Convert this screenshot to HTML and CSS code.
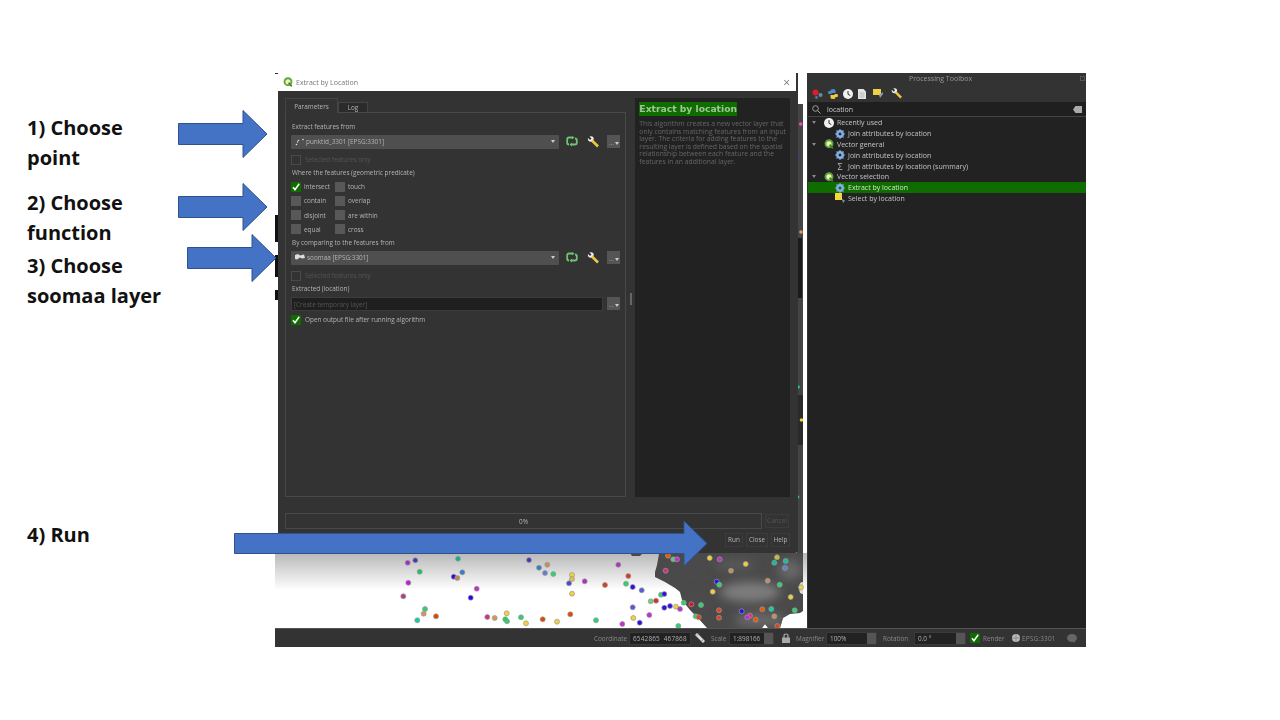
FILE: index.html
```html
<!DOCTYPE html>
<html lang="en">
<head>
  <meta charset="UTF-8">
  <title>Extract by location steps</title>
  <link rel="stylesheet" href="styles.css">
</head>
<body>
<div class="slide">

  <div class="shot">
    <div class="shot-main">
      <div class="map-area">
        <svg class="map" width="532" height="555" viewBox="275 73 532 555">
          <defs>
            <linearGradient id="fade" x1="0" y1="0" x2="0" y2="1">
              <stop offset="0" stop-color="#b8b8b8"/>
              <stop offset="1" stop-color="#ffffff"/>
            </linearGradient>
            <filter id="soft"><feGaussianBlur stdDeviation="5"/></filter>
            <clipPath id="raster">
              <path d="M630 553L632 556H640L642 554H659L657 565L655 572L655 577L665 582L675 588L680 592L682 600L690 610L697 617L707 628H762L765 624L768 628H780L783 618L790 614L800 613L803 611V553Z"/>
            </clipPath>
          </defs>
          <rect x="275" y="73" width="532" height="555" fill="#fff"/>
          <rect x="275" y="553" width="532" height="37" fill="url(#fade)"/>
          <rect x="797" y="104" width="6" height="449" fill="#444"/>
          <rect x="798" y="238" width="4" height="60" fill="#1b1b1b"/>
          <rect x="798" y="395" width="5" height="50" fill="#2a2a2a"/>
          <rect x="275" y="215" width="3" height="27" fill="#111"/>
          <rect x="275" y="255" width="3" height="22" fill="#111"/>
          <rect x="275" y="290" width="3" height="10" fill="#111"/>
          <rect x="275" y="73" width="3" height="1" fill="#333"/>
          <g clip-path="url(#raster)">
            <rect x="625" y="550" width="180" height="80" fill="#4a4a4a"/>
            <g filter="url(#soft)">
              <ellipse cx="750" cy="592" rx="30" ry="10" fill="#7c7c7c"/>
              <ellipse cx="700" cy="600" rx="10" ry="10" fill="#4c4c4c"/>
              <ellipse cx="760" cy="620" rx="26" ry="8" fill="#666"/>
              <ellipse cx="735" cy="565" rx="20" ry="6" fill="#585858"/>
              <ellipse cx="790" cy="570" rx="12" ry="10" fill="#686868"/>
            </g>
            <ellipse cx="802" cy="588" rx="3" ry="6" fill="#d8d8d8"/>
          </g>
          <g class="dots">
            <circle cx="407.7" cy="562.7" fill="#a030c0"/>
            <circle cx="415.3" cy="560.3" fill="#4438b0"/>
            <circle cx="458" cy="558.7" fill="#10b090"/>
            <circle cx="419.7" cy="571.7" fill="#22c060"/>
            <circle cx="408.3" cy="582.7" fill="#c020d0"/>
            <circle cx="403.3" cy="596.3" fill="#b04080"/>
            <circle cx="425" cy="609" fill="#30d070"/>
            <circle cx="423.7" cy="613.7" fill="#d09860"/>
            <circle cx="417.3" cy="620.3" fill="#10d0a0"/>
            <circle cx="436" cy="616.3" fill="#d84808"/>
            <circle cx="453.7" cy="576.7" fill="#3008e0"/>
            <circle cx="457.3" cy="578" fill="#c08850"/>
            <circle cx="462.3" cy="572.3" fill="#3080c0"/>
            <circle cx="476.7" cy="588.7" fill="#c030d0"/>
            <circle cx="470.7" cy="597.7" fill="#3000e0"/>
            <circle cx="529" cy="560" fill="#4438b0"/>
            <circle cx="539" cy="567.7" fill="#3080c0"/>
            <circle cx="547.3" cy="564.7" fill="#c09060"/>
            <circle cx="545" cy="573" fill="#6080d0"/>
            <circle cx="553.3" cy="574" fill="#30d070"/>
            <circle cx="487.3" cy="617" fill="#d03080"/>
            <circle cx="494.7" cy="618" fill="#d09860"/>
            <circle cx="506.7" cy="613.3" fill="#f0d040"/>
            <circle cx="507" cy="621.3" fill="#30d070"/>
            <circle cx="505.3" cy="619.3" fill="#20d060"/>
            <circle cx="521" cy="617.3" fill="#30d070"/>
            <circle cx="526" cy="623.3" fill="#f0d040"/>
            <circle cx="542.7" cy="619.3" fill="#e04808"/>
            <circle cx="572" cy="575" fill="#f0d040"/>
            <circle cx="572" cy="579" fill="#e0c040"/>
            <circle cx="569" cy="583.3" fill="#4848d0"/>
            <circle cx="584.7" cy="581.3" fill="#b030c0"/>
            <circle cx="605" cy="585" fill="#d04020"/>
            <circle cx="618.3" cy="564.7" fill="#b030c0"/>
            <circle cx="628.3" cy="576" fill="#d04020"/>
            <circle cx="626" cy="583.7" fill="#30d070"/>
            <circle cx="632.7" cy="587" fill="#3010e0"/>
            <circle cx="641.7" cy="590.3" fill="#5858d8"/>
            <circle cx="572" cy="593.7" fill="#f0d040"/>
            <circle cx="661" cy="594.7" fill="#30d070"/>
            <circle cx="664.3" cy="594" fill="#3010e0"/>
            <circle cx="650.7" cy="601.3" fill="#70d070"/>
            <circle cx="656" cy="600.7" fill="#d03030"/>
            <circle cx="632.7" cy="607.3" fill="#5858d8"/>
            <circle cx="664.3" cy="607.7" fill="#3010e0"/>
            <circle cx="670" cy="606" fill="#3010e0"/>
            <circle cx="676" cy="606.7" fill="#f0d040"/>
            <circle cx="680" cy="609" fill="#c030d0"/>
            <circle cx="683.7" cy="602.7" fill="#30d070"/>
            <circle cx="691.3" cy="604.3" fill="#e01030"/>
            <circle cx="701" cy="605" fill="#30d070"/>
            <circle cx="719" cy="610.3" fill="#d84820"/>
            <circle cx="719" cy="617.7" fill="#d84820"/>
            <circle cx="695.7" cy="616.3" fill="#30d070"/>
            <circle cx="698.7" cy="617.3" fill="#d84820"/>
            <circle cx="570.3" cy="614.3" fill="#e04808"/>
            <circle cx="557" cy="621.7" fill="#f0d040"/>
            <circle cx="596" cy="620.3" fill="#30d070"/>
            <circle cx="633.3" cy="618" fill="#f0d040"/>
            <circle cx="649.3" cy="615" fill="#c030d0"/>
            <circle cx="622.3" cy="624" fill="#c030d0"/>
            <circle cx="639.7" cy="622.7" fill="#3010e0"/>
            <circle cx="678.3" cy="626" fill="#30d070"/>
            <circle cx="741.7" cy="611.3" fill="#3010e0"/>
            <circle cx="750" cy="615.7" fill="#e03080"/>
            <circle cx="747.3" cy="617.3" fill="#c030d0"/>
            <circle cx="755.7" cy="619.7" fill="#e85808"/>
            <circle cx="762.3" cy="609.3" fill="#e85808"/>
            <circle cx="771.3" cy="609" fill="#10d0a0"/>
            <circle cx="774.3" cy="616.3" fill="#c09060"/>
            <circle cx="794.7" cy="610.3" fill="#30d070"/>
            <circle cx="777.3" cy="626" fill="#d84820"/>
            <circle cx="716.7" cy="581.7" fill="#3010e0"/>
            <circle cx="719.3" cy="584.7" fill="#30d070"/>
            <circle cx="712.7" cy="591.7" fill="#f0d040"/>
            <circle cx="767.7" cy="580.7" fill="#c09060"/>
            <circle cx="779.7" cy="584.7" fill="#30d070"/>
            <circle cx="790.7" cy="597" fill="#f0d040"/>
            <circle cx="801" cy="587.3" fill="#f0d040"/>
            <circle cx="731" cy="570.7" fill="#c09060"/>
            <circle cx="745.7" cy="564" fill="#f0d040"/>
            <circle cx="709.7" cy="558" fill="#f0d040"/>
            <circle cx="719.7" cy="559.3" fill="#c030d0"/>
            <circle cx="774.3" cy="562.7" fill="#10c0a0"/>
            <circle cx="785.7" cy="561" fill="#10c0a0"/>
            <circle cx="777" cy="557.3" fill="#c0c030"/>
            <circle cx="785" cy="568" fill="#6080d0"/>
            <circle cx="665.7" cy="570.7" fill="#d03080"/>
            <circle cx="673.3" cy="559.3" fill="#50d070"/>
            <circle cx="677" cy="559.3" fill="#c030d0"/>
            <circle cx="668" cy="555.7" fill="#e85808"/>
          </g>
          <g class="strip-dots">
            <circle cx="800.7" cy="124" fill="#e050c0"/>
            <circle cx="797.5" cy="155" fill="#4030b0"/>
            <circle cx="801" cy="232" fill="#e09860"/>
            <circle cx="798" cy="387" fill="#10d0a0"/>
            <circle cx="801.5" cy="420" fill="#f0d040"/>
            <circle cx="797.5" cy="497" fill="#30d070"/>
          </g>
        </svg>

        <div class="dialog">
          <div class="dialog-title">
            <svg width="10" height="10" viewBox="0 0 16 16"><circle cx="8" cy="7.500" r="5.600" fill="#f6f2b0" stroke="#59a83c" stroke-width="3"/><path d="M9 9l5 6" stroke="#3f8a2c" stroke-width="2.600"/></svg>
            <span class="dialog-name">Extract by Location</span>
            <span class="dialog-close">×</span>
          </div>
          <div class="dialog-body">
            <div class="dialog-panes">
              <div class="left-pane">
                <div class="tabs">
                  <span class="tab tab-active">Parameters</span>
                  <span class="tab">Log</span>
                </div>
                <div class="tab-page">
                  <div class="label first">Extract features from</div>
                  <div class="combo-row">
                    <div class="combo">
                      <svg width="9" height="8" viewBox="0 0 9 8"><g fill="#ddd"><circle cx="1.500" cy="6.500" r=".8"/><circle cx="3.500" cy="2.500" r=".8"/><circle cx="2.500" cy="4" r=".7"/><circle cx="8" cy="1.500" r=".8"/></g></svg>
                      <span class="combo-text">punktid_3301 [EPSG:3301]</span>
                      <span class="caret"></span>
                    </div>
                    <svg class="reload" width="12" height="11" viewBox="0 0 12 11"><path d="M3 8.500Q1.200 8.500 1.200 6.800V3.200Q1.200 1.500 3 1.500H6M9 2.500Q10.800 2.500 10.800 4.200V6.800Q10.800 8.500 9 8.500H6" fill="none" stroke="#6fc46f" stroke-width="1.800"/><path d="M6 0L8.500 1.500L6 3.500ZM6 6.500L3.500 8.500L6 10.500Z" fill="#6fc46f"/></svg>
                    <svg class="wrench" width="12" height="12" viewBox="0 0 12 12"><path d="M1 2L3 4L4.500 2.500L2.500 .5Q5 -.3 6.300 1.300Q7.200 2.800 6.200 4.200L5 5.500Q3 6.200 1.600 5Q.5 3.800 1 2Z" fill="#eee"/><path d="M5 4.500L11 10.500" stroke="#e8c840" stroke-width="2.600"/></svg>
                    <span class="more">...</span>
                  </div>
                  <div class="check-row disabled"><span class="box"></span><span>Selected features only</span></div>
                  <div class="label label-where">Where the features (geometric predicate)</div>
                  <div class="predicates">
                    <div class="pred"><span class="box on"><svg width="10" height="10" viewBox="0 0 10 10"><path d="M2 5.200L4 7.800L8.200 1.800" fill="none" stroke="#fff" stroke-width="1.500"/></svg></span><span>intersect</span></div>
                    <div class="pred"><span class="box"></span><span>touch</span></div>
                    <div class="pred"><span class="box"></span><span>contain</span></div>
                    <div class="pred"><span class="box"></span><span>overlap</span></div>
                    <div class="pred"><span class="box"></span><span>disjoint</span></div>
                    <div class="pred"><span class="box"></span><span>are within</span></div>
                    <div class="pred"><span class="box"></span><span>equal</span></div>
                    <div class="pred"><span class="box"></span><span>cross</span></div>
                  </div>
                  <div class="label">By comparing to the features from</div>
                  <div class="combo-row">
                    <div class="combo">
                      <svg width="10" height="7" viewBox="0 0 10 7"><path d="M0 1L3 0L5 1.500L9 .5L10 4L7 4.500L5 3.500L2 5.500L0 5Z" fill="#ddd"/></svg>
                      <span class="combo-text">soomaa [EPSG:3301]</span>
                      <span class="caret"></span>
                    </div>
                    <svg class="reload" width="12" height="11" viewBox="0 0 12 11"><path d="M3 8.500Q1.200 8.500 1.200 6.800V3.200Q1.200 1.500 3 1.500H6M9 2.500Q10.800 2.500 10.800 4.200V6.800Q10.800 8.500 9 8.500H6" fill="none" stroke="#6fc46f" stroke-width="1.800"/><path d="M6 0L8.500 1.500L6 3.500ZM6 6.500L3.500 8.500L6 10.500Z" fill="#6fc46f"/></svg>
                    <svg class="wrench" width="12" height="12" viewBox="0 0 12 12"><path d="M1 2L3 4L4.500 2.500L2.500 .5Q5 -.3 6.300 1.300Q7.200 2.800 6.200 4.200L5 5.500Q3 6.200 1.600 5Q.5 3.800 1 2Z" fill="#eee"/><path d="M5 4.500L11 10.500" stroke="#e8c840" stroke-width="2.600"/></svg>
                    <span class="more">...</span>
                  </div>
                  <div class="check-row disabled"><span class="box"></span><span>Selected features only</span></div>
                  <div class="label label-extracted">Extracted (location)</div>
                  <div class="output-row">
                    <div class="output">[Create temporary layer]</div>
                    <span class="more">...</span>
                  </div>
                  <div class="check-row"><span class="box on"><svg width="10" height="10" viewBox="0 0 10 10"><path d="M2 5.200L4 7.800L8.200 1.800" fill="none" stroke="#fff" stroke-width="1.500"/></svg></span><span>Open output file after running algorithm</span></div>
                </div>
              </div>
              <div class="splitter"><span class="grip"></span></div>
              <div class="help-pane">
                <div class="help-title"><span>Extract by location</span></div>
                <p class="help-text">This algorithm creates a new vector layer that<br>only contains matching features from an input<br>layer. The criteria for adding features to the<br>resulting layer is defined based on the spatial<br>relationship between each feature and the<br>features in an additional layer.</p>
              </div>
            </div>
            <div class="progress-row">
              <div class="progress">0%</div>
              <span class="btn btn-off">Cancel</span>
            </div>
            <div class="btn-row">
              <span class="btn btn-run">Run</span>
              <span class="btn btn-close">Close</span>
              <span class="btn btn-help">Help</span>
            </div>
          </div>
        </div>
      </div>

      <div class="toolbox">
        <div class="toolbox-title">Processing Toolbox<span class="float-btn"></span></div>
        <div class="toolbar">
          <svg width="11" height="10" viewBox="0 0 11 10"><circle cx="3.500" cy="3.500" r="3" fill="#d81f2a"/><circle cx="8.500" cy="6" r="2" fill="#6a8aa0"/><circle cx="4.500" cy="8.500" r="1.400" fill="#5a7a90"/></svg>
          <svg width="10" height="10" viewBox="0 0 10 10"><path d="M2.500 1.500Q2.500 0 5 0Q7.500 0 7.500 1.500V4H3.500V5H1Q0 5 0 3.500Q0 2 1 2H2.500Z" fill="#4d8cc4"/><path d="M7.500 8.500Q7.500 10 5 10Q2.500 10 2.500 8.500V6H6.500V5H9Q10 5 10 6.500Q10 8 9 8H7.500Z" fill="#f2c83c"/></svg>
          <svg width="10" height="10" viewBox="0 0 10 10"><circle cx="5" cy="5" r="5" fill="#f2f2f2"/><path d="M5 2V5.300L7.300 6.500" fill="none" stroke="#333" stroke-width="1"/></svg>
          <svg width="8" height="10" viewBox="0 0 8 10"><path d="M0 0H5.500L8 2.500V10H0Z" fill="#e4e4e4"/><path d="M1.500 4H6.500M1.500 6H6.500M1.500 8H6.500" stroke="#999" stroke-width=".6"/></svg>
          <svg class="tool-gap" width="11" height="10" viewBox="0 0 11 10"><path d="M0 0H8V6H0Z" fill="#f0d040"/><path d="M6 6L10 3L10 5L7 9Z" fill="#8a9ac0"/></svg>
          <svg class="tool-gap" width="11" height="11" viewBox="0 0 12 12"><path d="M1 2L3 4L4.500 2.500L2.500 .5Q5 -.3 6.300 1.300Q7.200 2.800 6.200 4.200L5 5.500Q3 6.200 1.600 5Q.5 3.800 1 2Z" fill="#eee"/><path d="M5 4.500L11 10.500" stroke="#e8c840" stroke-width="2.600"/></svg>
        </div>
        <div class="search">
          <svg width="9" height="9" viewBox="0 0 9 9"><circle cx="3.500" cy="3.500" r="2.800" fill="none" stroke="#aaa" stroke-width=".9"/><path d="M5.600 5.600L8.500 8.500" stroke="#aaa" stroke-width="1"/></svg>
          <span class="search-text">location</span>
          <svg class="search-clear" width="9" height="7" viewBox="0 0 9 7"><path d="M2.500 0H9V7H2.500L0 3.500Z" fill="#aaa"/></svg>
        </div>
        <div class="tree">
          <div class="tree-row group"><span class="arrow-down"></span>
            <svg width="10" height="10" viewBox="0 0 10 10"><circle cx="5" cy="5" r="5" fill="#f2f2f2"/><path d="M5 2V5.300L7.300 6.500" fill="none" stroke="#333" stroke-width="1"/></svg>
            <span>Recently used</span></div>
          <div class="tree-row leaf">
            <svg width="10" height="10" viewBox="0 0 10 10"><circle cx="5" cy="5" r="3" fill="none" stroke="#8fb8e8" stroke-width="1.800"/><path d="M5 0V10M0 5H10M1.500 1.500L8.500 8.500M8.500 1.500L1.500 8.500" stroke="#7aa8e0" stroke-width="1.200"/><circle cx="5" cy="5" r="1.200" fill="#222"/></svg>
            <span>Join attributes by location</span></div>
          <div class="tree-row group"><span class="arrow-down"></span>
            <svg width="10" height="10" viewBox="0 0 16 16"><circle cx="8" cy="7.500" r="5.600" fill="#f6f2b0" stroke="#59a83c" stroke-width="3"/><path d="M9 9l5 6" stroke="#3f8a2c" stroke-width="2.600"/></svg>
            <span>Vector general</span></div>
          <div class="tree-row leaf">
            <svg width="10" height="10" viewBox="0 0 10 10"><circle cx="5" cy="5" r="3" fill="none" stroke="#8fb8e8" stroke-width="1.800"/><path d="M5 0V10M0 5H10M1.500 1.500L8.500 8.500M8.500 1.500L1.500 8.500" stroke="#7aa8e0" stroke-width="1.200"/><circle cx="5" cy="5" r="1.200" fill="#222"/></svg>
            <span>Join attributes by location</span></div>
          <div class="tree-row leaf">
            <span class="sigma">Σ</span>
            <span>Join attributes by location (summary)</span></div>
          <div class="tree-row group"><span class="arrow-down"></span>
            <svg width="10" height="10" viewBox="0 0 16 16"><circle cx="8" cy="7.500" r="5.600" fill="#f6f2b0" stroke="#59a83c" stroke-width="3"/><path d="M9 9l5 6" stroke="#3f8a2c" stroke-width="2.600"/></svg>
            <span>Vector selection</span></div>
          <div class="tree-row leaf selected">
            <svg width="10" height="10" viewBox="0 0 10 10"><circle cx="5" cy="5" r="3" fill="none" stroke="#8fb8e8" stroke-width="1.800"/><path d="M5 0V10M0 5H10M1.500 1.500L8.500 8.500M8.500 1.500L1.500 8.500" stroke="#7aa8e0" stroke-width="1.200"/><circle cx="5" cy="5" r="1.200" fill="#0b6b00"/></svg>
            <span>Extract by location</span></div>
          <div class="tree-row leaf">
            <svg width="10" height="10" viewBox="0 0 10 10"><rect width="7" height="7" fill="#f2d83c"/><path d="M7 6L10 7.500L8 10Z" fill="#7a9ac0"/></svg>
            <span>Select by location</span></div>
        </div>
      </div>
    </div>

    <div class="statusbar">
      <span class="st-coord">Coordinate</span>
      <span class="field field-coord">6542865&nbsp; 467868</span>
      <svg class="st-mouse" width="10" height="11" viewBox="0 0 10 11"><path d="M1 1L9 9" stroke="#ddd" stroke-width="3"/><path d="M2 2.500L4 .5M6 8.500L9 6" stroke="#888" stroke-width="1"/></svg>
      <span class="st-scale">Scale</span>
      <span class="field field-scale">1:898166<span class="drop"></span></span>
      <svg class="st-lock" width="8" height="10" viewBox="0 0 8 10"><path d="M2 5V3Q2 1 4 1Q6 1 6 3V5" fill="none" stroke="#aaa" stroke-width="1.200"/><rect y="4.500" width="8" height="5.500" fill="#aaa"/></svg>
      <span class="st-magn">Magnifier</span>
      <span class="field field-magn">100%<span class="spin"></span></span>
      <span class="st-rot">Rotation</span>
      <span class="field field-rot">0.0 °<span class="spin"></span></span>
      <span class="box on st-check"><svg width="10" height="10" viewBox="0 0 10 10"><path d="M2 5.200L4 7.800L8.200 1.800" fill="none" stroke="#fff" stroke-width="1.500"/></svg></span>
      <span class="st-render">Render</span>
      <svg class="st-globe" width="8" height="8" viewBox="0 0 8 8"><circle cx="4" cy="4" r="4" fill="#bbb"/><path d="M0 4H8M4 0V8" stroke="#666" stroke-width=".5"/></svg>
      <span class="st-epsg">EPSG:3301</span>
      <svg class="st-chat" width="10" height="9" viewBox="0 0 10 9"><ellipse cx="5" cy="4" rx="5" ry="4" fill="#666"/><path d="M6 7L8 9L8 6Z" fill="#666"/></svg>
    </div>
  </div>

  <div class="note note-1">1) Choose<br>point</div>
  <div class="note note-2">2) Choose<br>function</div>
  <div class="note note-3">3) Choose<br>soomaa layer</div>
  <div class="note note-4">4) Run</div>

  <svg class="arrows" width="1280" height="720" viewBox="0 0 1280 720">
    <g fill="#4472c4" stroke="#2f528f">
      <path d="M178.500 123.500H243V110.500L267 134L243 157.500V144.500H178.500Z"/>
      <path d="M178.500 196.500H243V183.500L267 207L243 230.500V217.500H178.500Z"/>
      <path d="M187.500 247.500H252V234.500L276 258L252 281.500V268.500H187.500Z"/>
      <path d="M234.500 533.500H684V521L707 543.500L684 566V553.500H234.500Z"/>
    </g>
  </svg>
</div>
</body>
</html>
```

FILE: styles.css
```css
* {
  margin: 0;
  padding: 0;
  box-sizing: border-box;
}
html, body {
  width: 100%;
  height: 100%;
  overflow: hidden;
  background: #fff;
}
.slide {
  position: relative;
  width: 1280px;
  height: 720px;
  background: #fff;
  font-family: 'Open Sans', sans-serif;
}

/* slide annotations */
.note {
  position: absolute;
  left: 27px;
  font-size: 20px;
  font-weight: 700;
  line-height: 29.5px;
  color: #111;
}
.note-1 { top: 113px; }
.note-2 { top: 188px; }
.note-3 { top: 251px; }
.note-4 { top: 520px; }
.arrows {
  position: absolute;
  top: 0;
  left: 0;
}

/* qgis screenshot */
.shot {
  position: absolute;
  left: 275px;
  top: 73px;
  width: 811px;
  height: 574px;
  display: flex;
  flex-direction: column;
  background: #333;
  font-size: 7px;
  color: #b4b4b4;
  filter: blur(0.35px);
}
.shot-main {
  flex: 1;
  display: flex;
  min-height: 0;
}
.map-area {
  position: relative;
  width: 532px;
  background: #fff;
}
.map {
  position: absolute;
  top: 0;
  left: 0;
}
.dots circle {
  r: 2.5px;
  stroke: #999;
  stroke-width: 0.7px;
}
.strip-dots circle {
  r: 1.8px;
}

/* dialog */
.dialog {
  position: absolute;
  left: 3px;
  top: 0;
  width: 520px;
  height: 480px;
  display: flex;
  flex-direction: column;
  border-radius: 0 0 3px 0;
  overflow: hidden;
  font-size: 6.4px;
}
.dialog-title {
  height: 18px;
  flex: none;
  display: flex;
  align-items: center;
  padding: 0 5px;
  background: #fff;
  border-right: 2px solid #333;
  color: #777;
  font-size: 7px;
}
.dialog-name {
  margin-left: 3px;
}
.dialog-close {
  margin-left: auto;
  margin-right: 1px;
  font-size: 12px;
  color: #777;
}
.dialog-body {
  flex: 1;
  display: flex;
  flex-direction: column;
  background: #333;
  padding: 7px 8px 6px 7px;
  min-height: 0;
}
.dialog-panes {
  flex: 1;
  display: flex;
  min-height: 0;
}
.left-pane {
  width: 341px;
  display: flex;
  flex-direction: column;
}
.tabs {
  display: flex;
  align-items: flex-end;
  height: 14px;
  flex: none;
}
.tab {
  height: 10px;
  width: 30px;
  border: 1px solid #444;
  border-bottom: none;
  background: #2b2b2b;
  display: flex;
  align-items: center;
  justify-content: center;
}
.tab-active {
  height: 15px;
  width: 53px;
  background: #333;
  margin-bottom: -1px;
  position: relative;
  z-index: 1;
}
.tab-page {
  flex: 1;
  border: 1px solid #484848;
  padding: 0 5px;
}
.label {
  height: 10px;
  line-height: 10px;
  padding-left: 1px;
  margin-top: 4px;
  white-space: nowrap;
}
.label.first {
  margin-top: 9px;
}
.label.label-where {
  margin-top: 3px;
}
.label.label-extracted {
  margin-top: 3px;
}
.combo-row, .output-row {
  display: flex;
  align-items: center;
  height: 14px;
  margin-top: 2.5px;
}
.output-row {
  margin-top: 3px;
}
.combo {
  width: 268px;
  height: 14px;
  background: #4f4f4f;
  display: flex;
  align-items: center;
  padding: 0 4px;
  border-radius: 1px;
}
.combo-text {
  margin-left: 2px;
  white-space: nowrap;
}
.caret {
  margin-left: auto;
  border-left: 2px solid transparent;
  border-right: 2px solid transparent;
  border-top: 3px solid #ccc;
}
.reload {
  margin-left: 7px;
}
.wrench {
  margin-left: 9px;
}
.more {
  position: relative;
  margin-left: 8px;
  width: 13px;
  height: 13px;
  line-height: 15px;
  padding-left: 2px;
  background: #555;
  color: #999;
}
.more::after {
  content: "";
  position: absolute;
  right: 1px;
  bottom: 3px;
  border-left: 2px solid transparent;
  border-right: 2px solid transparent;
  border-top: 3px solid #ccc;
}
.output {
  width: 312px;
  height: 14px;
  line-height: 13px;
  background: #1f1f1f;
  border: 1px solid #3c3c3c;
  padding-left: 2px;
  color: #555;
}
.output-row .more {
  margin-left: 4px;
}
.check-row {
  display: flex;
  align-items: center;
  height: 10px;
  margin-top: 6px;
  white-space: nowrap;
}
.check-row .box {
  margin-right: 4px;
}
.output-row + .check-row {
  margin-top: 4px;
}
.disabled {
  color: #555;
}
.disabled .box {
  background: transparent;
  border: 1px solid #4a4a4a;
}
.box {
  width: 10px;
  height: 10px;
  flex: none;
  background: #585858;
  display: inline-block;
}
.box.on {
  background: #0f6d00;
}
.box svg {
  display: block;
}
.predicates {
  display: grid;
  grid-template-columns: 44px 80px;
  grid-auto-rows: 10px;
  row-gap: 4.3px;
  margin-top: 4px;
}
.pred {
  display: flex;
  align-items: center;
  gap: 3px;
  white-space: nowrap;
}
.splitter {
  width: 10px;
  display: flex;
  align-items: center;
  justify-content: center;
}
.grip {
  width: 2px;
  height: 12px;
  background: #666;
  margin-top: 2px;
}
.help-pane {
  flex: 1;
  background: #222;
  padding: 4px;
  color: #666;
}
.help-title {
  font-family: 'DejaVu Sans', sans-serif;
  font-weight: bold;
  font-size: 9.2px;
  line-height: 14px;
}
.help-title span {
  display: inline-block;
  background: #0f6d00;
  color: #9fc797;
  white-space: nowrap;
}
.help-text {
  margin-top: 4px;
  font-size: 6.8px;
  line-height: 7.6px;
  white-space: nowrap;
}
.progress-row {
  display: flex;
  align-items: center;
  margin-top: 16px;
  height: 16px;
  flex: none;
}
.progress {
  width: 477px;
  height: 16px;
  line-height: 16px;
  border: 1px solid #484848;
  text-align: center;
}
.btn {
  height: 14px;
  line-height: 12px;
  border: 1px solid #3c3c3c;
  background: #333;
  text-align: center;
  white-space: nowrap;
}
.btn-off {
  color: #555;
  width: 24px;
  margin-left: 3px;
}
.btn-row {
  display: flex;
  justify-content: flex-end;
  gap: 3px;
  margin-top: 4px;
  height: 14px;
  flex: none;
}
.btn-run { width: 18px; }
.btn-close { width: 22px; }
.btn-help { width: 19px; }

/* toolbox panel */
.toolbox {
  flex: 1;
  display: flex;
  flex-direction: column;
  background: #333;
  padding-left: 1px;
}
.toolbox-title {
  position: relative;
  height: 12px;
  flex: none;
  line-height: 12px;
  padding-right: 13px;
  text-align: center;
  color: #999;
}
.float-btn {
  position: absolute;
  right: 1px;
  top: 3px;
  width: 5px;
  height: 5px;
  border: 1px solid #555;
}
.toolbar {
  height: 17px;
  flex: none;
  display: flex;
  align-items: center;
  gap: 5px;
  padding-left: 4px;
}
.tool-gap {
  margin-left: 2px;
}
.search {
  height: 14px;
  flex: none;
  display: flex;
  align-items: center;
  background: #1f1f1f;
  padding: 0 4px;
  color: #ccc;
}
.search-text {
  margin-left: 6px;
}
.search-clear {
  margin-left: auto;
}
.tree {
  flex: 1;
  background: #222;
  border-top: 1px solid #444;
  padding-top: 0.5px;
}
.tree-row {
  height: 10.8px;
  display: flex;
  align-items: center;
  white-space: nowrap;
  color: #c4c4c4;
}
.tree-row.group {
  padding-left: 4px;
  gap: 3px;
}
.tree-row.leaf {
  padding-left: 27px;
  gap: 3px;
}
.tree-row.selected {
  background: #0f6d00;
  color: #cfe6ca;
}
.arrow-down {
  border-left: 2px solid transparent;
  border-right: 2px solid transparent;
  border-top: 3px solid #888;
  margin-right: 5px;
}
.sigma {
  width: 10px;
  text-align: center;
  font-size: 9px;
  color: #bbb;
}

/* status bar */
.statusbar {
  height: 19px;
  flex: none;
  display: flex;
  align-items: center;
  background: #333;
  border-top: 1px solid #555;
  color: #888;
  font-size: 6.4px;
  white-space: nowrap;
}
.st-coord { margin-left: 319px; width: 32px; }
.field {
  height: 13px;
  line-height: 12px;
  background: #222;
  color: #b0b0b0;
  position: relative;
  padding-left: 3px;
  border: 1px solid #3a3a3a;
}
.field-coord { width: 62px; margin-left: 3px; letter-spacing: 0.2px; }
.st-mouse { margin-left: 4px; }
.st-scale { margin-left: 6px; width: 14px; }
.field-scale { width: 45px; margin-left: 4px; }
.st-lock { margin-left: 8px; }
.st-magn { margin-left: 6px; width: 27px; }
.field-magn { width: 51px; margin-left: 3px; }
.st-rot { margin-left: 6px; width: 25px; }
.field-rot { width: 52px; margin-left: 6px; }
.st-check { margin-left: 4px; }
.st-render { margin-left: 3px; width: 21px; }
.st-globe { margin-left: 8px; }
.st-epsg { margin-left: 2px; width: 32px; letter-spacing: 0.2px; }
.st-chat { margin-left: 13px; }
.drop, .spin {
  position: absolute;
  right: 0;
  top: 0;
  bottom: 0;
  width: 9px;
  background: #555;
}
```
